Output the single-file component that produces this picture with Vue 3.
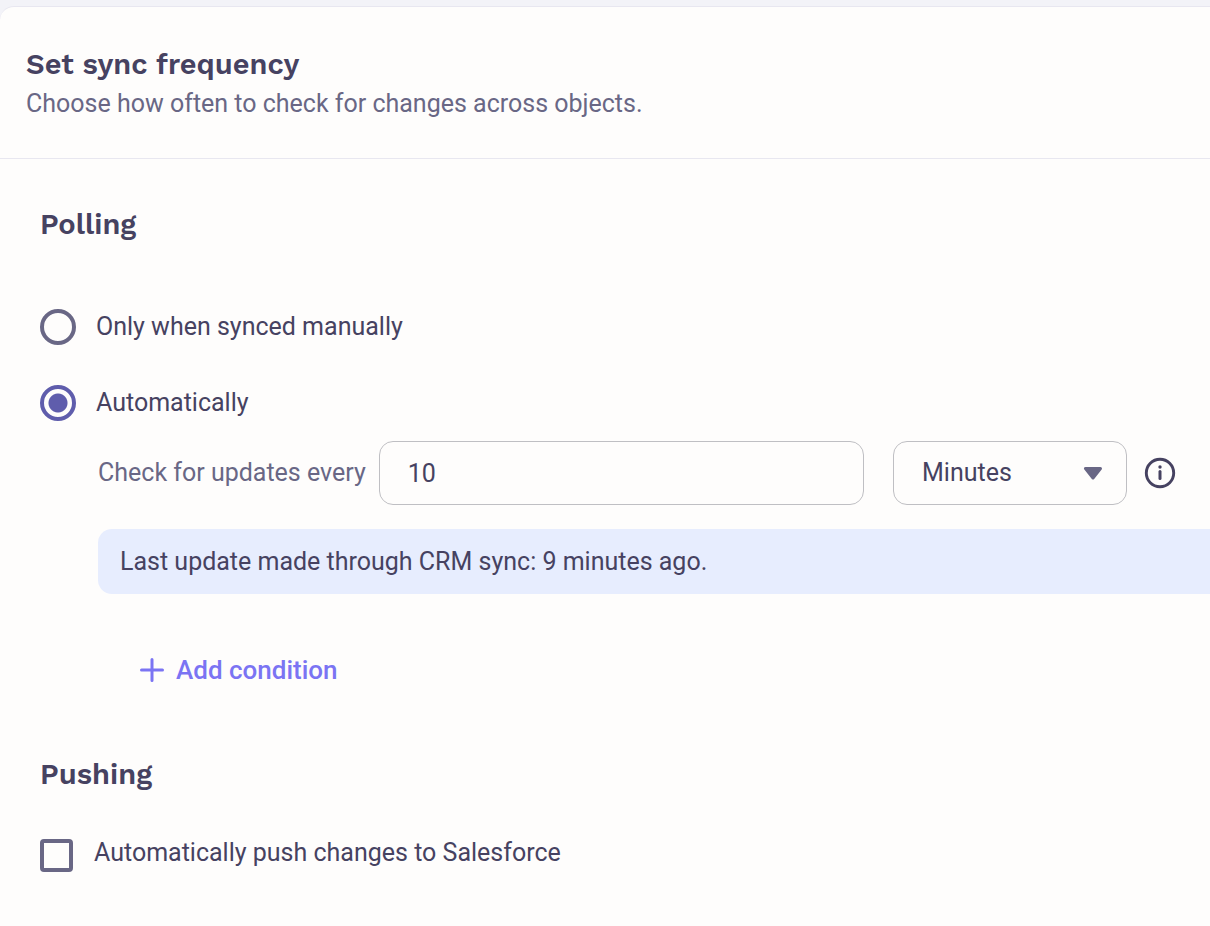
<script setup>
import { ref } from 'vue'

const mode = ref('auto')
const interval = ref('10')
const unit = ref('Minutes')
const push = ref(false)
</script>

<template>
  <main class="card">
    <header class="head">
      <h1>Set sync frequency</h1>
      <p>Choose how often to check for changes across objects.</p>
    </header>

    <div class="body">
      <section>
        <h2>Polling</h2>
        <label class="option first">
          <input v-model="mode" type="radio" name="mode" value="manual" />
          <span>Only when synced manually</span>
        </label>
        <label class="option">
          <input v-model="mode" type="radio" name="mode" value="auto" />
          <span>Automatically</span>
        </label>

        <div class="details">
          <div class="row">
            <label class="every" for="interval">Check for updates every</label>
            <input id="interval" v-model="interval" class="field" type="text" />
            <div class="select">
              <select v-model="unit" aria-label="Unit">
                <option>Minutes</option>
                <option>Hours</option>
                <option>Days</option>
              </select>
              <svg class="arrow" width="20" height="14" viewBox="0 0 20 14" aria-hidden="true">
                <path d="M2.500 2.500h15L10 12z" fill="#696785" stroke="#696785" stroke-width="3" stroke-linejoin="round" />
              </svg>
            </div>
            <button class="info" type="button" aria-label="More information">
              <svg width="32" height="32" viewBox="0 0 32 32" aria-hidden="true">
                <circle cx="16" cy="16" r="13.700" fill="none" stroke="#464261" stroke-width="2.900" />
                <path d="M16 14.500V21.500" stroke="#464261" stroke-width="3" stroke-linecap="round" />
                <circle cx="16" cy="10" r="1.700" fill="#464261" />
              </svg>
            </button>
          </div>
          <p class="notice">Last update made through CRM sync: 9 minutes ago.</p>
          <button class="add" type="button">
            <svg width="24" height="24" viewBox="0 0 24 24" aria-hidden="true">
              <path d="M12 1.500v21M1.500 12h21" stroke="#7b74f3" stroke-width="3" stroke-linecap="round" />
            </svg>
            Add condition
          </button>
        </div>
      </section>

      <section class="pushing">
        <h2>Pushing</h2>
        <label class="check">
          <input v-model="push" type="checkbox" />
          <span>Automatically push changes to Salesforce</span>
        </label>
      </section>
    </div>
  </main>
</template>

<style>
html {
  background: #f3f3f8;
}
</style>

<style scoped>
* {
  box-sizing: border-box;
}
.card {
  margin-top: 6px;
  min-height: calc(100vh - 6px);
  border-top: 1px solid #e8e7f0;
  border-radius: 14px 0 0 0;
  background: #fefdfc;
  color: #464261;
  font: 25px/32px Roboto, sans-serif;
  overflow: hidden;
}
h1,
h2,
p {
  margin: 0;
}
h1,
h2 {
  font: 600 29px/36px "Work Sans", Inter, sans-serif;
}
.head {
  padding: 39px 26px 38px;
  border-bottom: 1px solid #e8e7f0;
}
.head p {
  margin-top: 6px;
  color: #696785;
}
.body {
  padding: 47px 0 40px 40px;
}
.option {
  display: flex;
  align-items: center;
  gap: 20px;
  height: 36px;
  margin-top: 40px;
}
.option.first {
  margin-top: 67px;
}
.option input,
.check input {
  appearance: none;
  flex: none;
  margin: 0;
  border: 4px solid #696785;
}
.option input {
  width: 36px;
  height: 36px;
  border-radius: 50%;
}
.option input:checked {
  border-color: #5f5dac;
  background: radial-gradient(circle, #5f5dac 9px, transparent 10px);
}
.details {
  margin: 20px 0 0 58px;
}
.row {
  display: flex;
  align-items: center;
  padding-right: 34px;
}
.every {
  flex: none;
  margin-right: 13px;
  color: #696785;
}
.field,
select {
  height: 64px;
  padding: 0 28px;
  border: 1px solid #bfbfc3;
  border-radius: 14px;
  background: transparent;
  color: inherit;
  font: inherit;
}
.field {
  flex: 1;
  min-width: 0;
}
.select {
  display: grid;
  align-items: center;
  width: 234px;
  margin: 0 17px 0 29px;
}
.select > * {
  grid-area: 1 / 1;
}
select {
  appearance: none;
  width: 100%;
}
.arrow {
  justify-self: end;
  margin-right: 24px;
  pointer-events: none;
}
button {
  display: flex;
  align-items: center;
  padding: 0;
  border: 0;
  background: none;
  cursor: pointer;
}
.notice {
  margin-top: 24px;
  padding: 17px 22px 16px;
  border-radius: 14px 0 0 14px;
  background: #e7edfe;
}
.add {
  gap: 12px;
  margin: 60px 0 0 42px;
  color: #7b74f3;
  font: 500 26px/32px Roboto, sans-serif;
}
.pushing {
  margin-top: 70px;
}
.check {
  display: flex;
  align-items: center;
  gap: 21px;
  margin-top: 45px;
}
.check input {
  width: 33px;
  height: 33px;
  border-radius: 4px;
}
.check span {
  padding-bottom: 4px;
}
</style>
